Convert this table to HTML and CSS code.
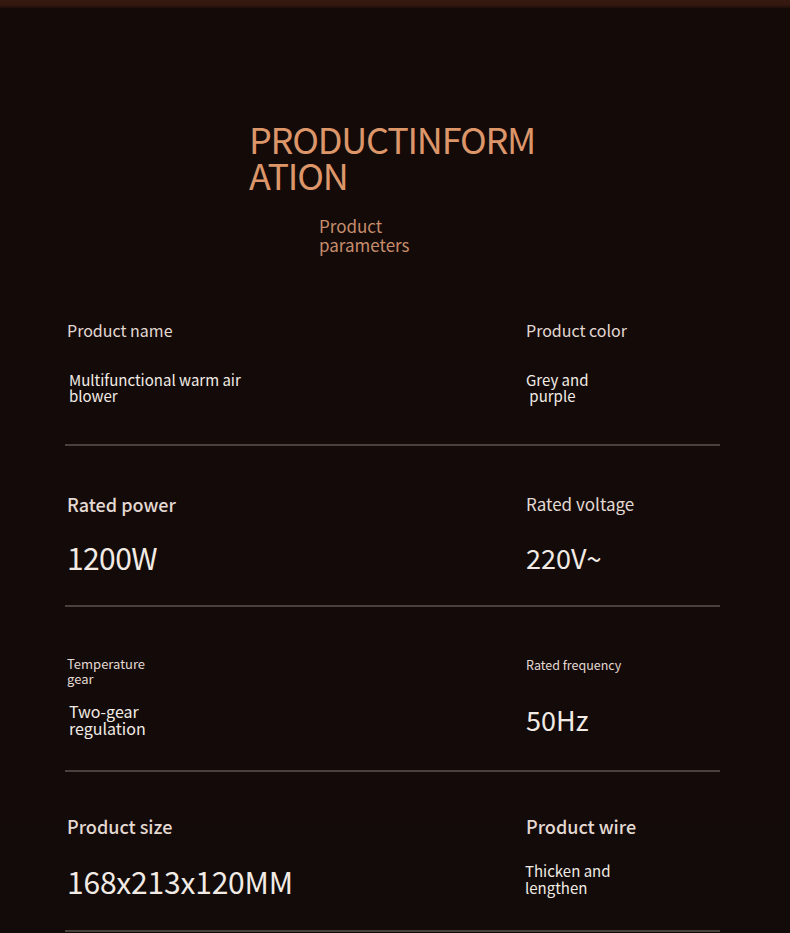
FILE: index.html
```html
<!DOCTYPE html>
<html lang="en">
<head>
<meta charset="utf-8">
<title>Product information</title>
<link rel="stylesheet" href="styles.css">
</head>
<body>
<div class="page">
  <div class="topbar"></div>
  <header class="head">
    <h1 class="title">PRODUCTINFORM<br>ATION</h1>
    <p class="subtitle">Product<br>parameters</p>
  </header>
  <section class="specs">
    <div class="row row1">
      <div class="cell">
        <div class="label">Product name</div>
        <div class="value small v1 indent">Multifunctional warm air<br>blower</div>
      </div>
      <div class="cell">
        <div class="label">Product color</div>
        <div class="value small v1">Grey and<br>&nbsp;purple</div>
      </div>
    </div>
    <div class="row row2">
      <div class="cell">
        <div class="label strong">Rated power</div>
        <div class="value big v2">1200W</div>
      </div>
      <div class="cell">
        <div class="label">Rated voltage</div>
        <div class="value mid v2r">220V~</div>
      </div>
    </div>
    <div class="row row3">
      <div class="cell">
        <div class="label tiny">Temperature<br>gear</div>
        <div class="value small2 v3 indent">Two-gear<br>regulation</div>
      </div>
      <div class="cell">
        <div class="label tiny2">Rated frequency</div>
        <div class="value mid v3r">50Hz</div>
      </div>
    </div>
    <div class="row row4">
      <div class="cell">
        <div class="label strong">Product size</div>
        <div class="value big wide v4">168x213x120MM</div>
      </div>
      <div class="cell">
        <div class="label strong">Product wire</div>
        <div class="value small3 v4r">Thicken and<br>lengthen</div>
      </div>
    </div>
  </section>
</div>
</body>
</html>
```

FILE: styles.css
```css
* { box-sizing: border-box; }
html, body {
  margin: 0;
  padding: 0;
  background: #130b09;
}
body {
  font-family: "Noto Sans CJK SC", "Noto Sans", sans-serif;
  color: #e6ddd7;
  width: 790px;
  height: 933px;
  overflow: hidden;
}
.page {
  width: 790px;
  height: 933px;
  background: linear-gradient(to bottom, #140b09 0%, #130b09 100%);
}
.topbar {
  height: 8px;
  background: linear-gradient(to bottom, #36190f 0px, #34180f 5px, #1c0d09 8px);
}
.head {
  padding-left: 249px;
  padding-top: 112px;
}
.title {
  margin: 0;
  font-size: 36px;
  line-height: 36px;
  font-weight: 400;
  color: #dc966a;
  letter-spacing: -1.2px;
}
.subtitle {
  margin: 24px 0 0 70px;
  font-size: 17px;
  line-height: 19px;
  font-weight: 400;
  color: #c78d6c;
}
.specs {
  margin-top: 46px;
  margin-left: 65px;
  width: 655px;
}
.row {
  display: grid;
  grid-template-columns: 459px 1fr;
  padding-left: 2px;
  border-bottom: 2px solid #4a403c;
}
.row1 { height: 146px; padding-top: 20px; }
.row2 { height: 161px; padding-top: 48px; }
.row3 { height: 165px; padding-top: 49px; }
.row4 { height: 160px; padding-top: 44px; }
.cell { display: flex; flex-direction: column; }
.label {
  font-size: 16px;
  line-height: 20px;
  color: #e3d9d2;
}
.label.strong { font-size: 18px; font-weight: 500; }
.row2 .cell + .cell .label { font-size: 17px; font-weight: 400; }
.label.tiny { font-size: 13px; line-height: 15px; }
.label.tiny2 { font-size: 12.5px; line-height: 15px; margin-top: 1px; }
.value { color: #f2ebe5; }
.value.indent { padding-left: 2px; }
.value.small { font-size: 15px; line-height: 16px; }
.value.small2 { font-size: 16px; line-height: 17px; }
.value.small3 { font-size: 15px; line-height: 16.5px; margin-left: -1px; }
.value.big { font-size: 30px; line-height: 32px; letter-spacing: -0.6px; }
.value.big.wide { letter-spacing: -0.2px; }
.value.mid { font-size: 27px; line-height: 32px; }
.v1 { margin-top: 32px; }
.v2 { margin-top: 27px; }
.v2r { margin-top: 28px; }
.v3 { margin-top: 17px; }
.v3r { margin-top: 32px; }
.v4 { margin-top: 29px; }
.v4r { margin-top: 27px; }
```
